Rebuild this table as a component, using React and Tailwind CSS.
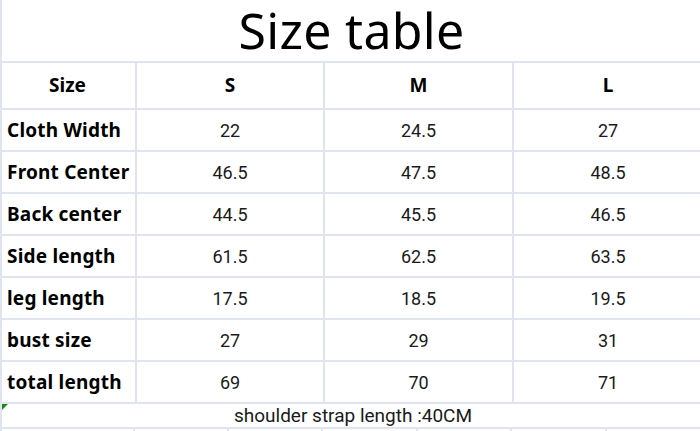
import React from 'react';

const rows = [
  ['Cloth Width', '22', '24.5', '27'],
  ['Front Center', '46.5', '47.5', '48.5'],
  ['Back center', '44.5', '45.5', '46.5'],
  ['Side length', '61.5', '62.5', '63.5'],
  ['leg length', '17.5', '18.5', '19.5'],
  ['bust size', '27', '29', '31'],
  ['total length', '69', '70', '71'],
];

const cols = 'grid grid-cols-[135px_188px_189px_188px]';

export default function App() {
  return (
    <div className="w-[700px] h-[431px] overflow-hidden bg-white border-l-2 border-[#dfe4ef] font-['Roboto',sans-serif] text-[#1a1a1a]">
      {/* title */}
      <div className="h-[63px] border-b-2 border-[#dfe4ef] flex items-center justify-center">
        <span className="font-['Noto_Sans',sans-serif] text-[50px] leading-[61px] text-black pl-[1px] tracking-[0.3px]">Size table</span>
      </div>

      {/* header */}
      <div className={`${cols} h-[47px] border-b-2 border-[#dfe4ef] font-['Noto_Sans',sans-serif] font-bold text-[19px] text-black`}>
        <div className="border-r-2 border-[#dfe4ef] flex items-center justify-center pr-[2px]">Size</div>
        <div className="border-r-2 border-[#dfe4ef] flex items-center justify-center">S</div>
        <div className="border-r-2 border-[#dfe4ef] flex items-center justify-center">M</div>
        <div className="flex items-center justify-center">L</div>
      </div>

      {rows.map((r) => (
        <div key={r[0]} className={`${cols} h-[42px] border-b-2 border-[#dfe4ef] text-[18px]`}>
          <div className="border-r-2 border-[#dfe4ef] flex items-center pl-[5px] font-['Noto_Sans',sans-serif] font-bold text-[19px] text-black whitespace-nowrap tracking-[0.2px]">{r[0]}</div>
          <div className="border-r-2 border-[#dfe4ef] flex items-center justify-center">{r[1]}</div>
          <div className="border-r-2 border-[#dfe4ef] flex items-center justify-center">{r[2]}</div>
          <div className="flex items-center justify-center">{r[3]}</div>
        </div>
      ))}

      {/* note row */}
      <div className="relative h-[25px] border-b-2 border-[#dfe4ef] flex items-center justify-center text-[19px] leading-none">
        <span className="absolute left-0 top-0 w-0 h-0 border-t-[6px] border-r-[6px] border-t-[#1a8a1a] border-r-transparent" />
        <span className="pl-[4px]">shoulder strap length :40CM</span>
      </div>

      {/* spreadsheet gridlines below */}
      <div className="grid grid-cols-[133px_94px_94px_95px_94px_95px_1fr] h-[10px]">
        <div className="border-r-2 border-[#dfe4ef]" />
        <div className="border-r-2 border-[#dfe4ef]" />
        <div className="border-r-2 border-[#dfe4ef]" />
        <div className="border-r-2 border-[#dfe4ef]" />
        <div className="border-r-2 border-[#dfe4ef]" />
        <div className="border-r-2 border-[#dfe4ef]" />
        <div />
      </div>
    </div>
  );
}
